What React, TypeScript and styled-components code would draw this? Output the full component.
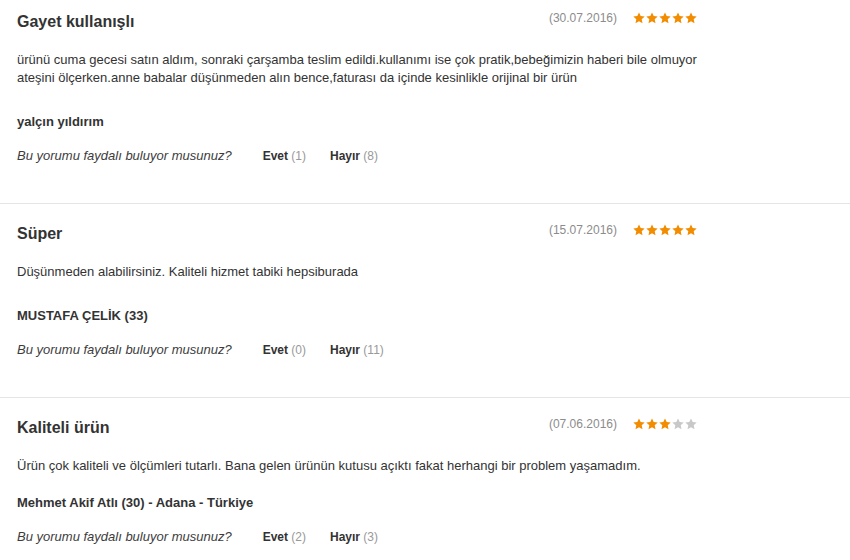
import React from "react";
import styled, { createGlobalStyle } from "styled-components";

const GlobalStyle = createGlobalStyle`
  html, body { margin: 0; padding: 0; background: #fff; }
  body { font-family: "Liberation Sans", Arial, sans-serif; color: #333; }
`;

const List = styled.div`
  width: 850px;
`;

const Review = styled.section`
  padding: 20px 150px 38px 17px;
  border-bottom: 1px solid #e5e5e5;
  &:first-child { padding-top: 12px; }
  &:last-child { border-bottom: none; }
`;

const Header = styled.div`
  display: flex;
  justify-content: space-between;
  align-items: flex-start;
`;

const Title = styled.h3`
  margin: 0;
  font-size: 16px;
  font-weight: bold;
  line-height: 20px;
  color: #333;
`;

const Meta = styled.div`
  display: flex;
  align-items: center;
  gap: 16px;
  margin-top: -1px;
  margin-right: 3px;
`;

const DateText = styled.span`
  font-size: 12px;
  line-height: 14px;
  color: #8c8c8c;
`;

const Stars = styled.div`
  display: flex;
  gap: 1px;
`;

const Body = styled.p<{ $tight?: boolean }>`
  margin: 19px 0 ${(p) => (p.$tight ? "19px" : "26px")};
  font-size: 13px;
  line-height: 18px;
  color: #333;
`;

const Author = styled.div`
  font-size: 13px;
  font-weight: bold;
  line-height: 18px;
  color: #333;
`;

const Helpful = styled.div`
  display: flex;
  align-items: center;
  margin-top: 16px;
  font-size: 12px;
  line-height: 18px;
`;

const Question = styled.span`
  font-size: 13px;
  font-style: italic;
  color: #3c3c3c;
  margin-right: 31px;
`;

const Vote = styled.span`
  font-weight: bold;
  color: #333;
  & + & { margin-left: 24px; }
`;

const Count = styled.span`
  font-weight: normal;
  color: #999;
`;

const Star: React.FC<{ on: boolean }> = ({ on }) => (
  <svg width="12" height="12" viewBox="0 0 24 24">
    <path
      d="M12 1l3.4 7.2 7.9.9-5.9 5.4 1.6 7.8L12 18.4l-7 3.9 1.6-7.8L.7 9.1l7.9-.9z"
      fill={on ? "#f28c00" : "#c8c8c8"}
    />
  </svg>
);

type R = {
  title: string;
  date: string;
  rating: number;
  body: string[];
  author: string;
  yes: number;
  no: number;
  tight?: boolean;
};

const reviews: R[] = [
  {
    title: "Gayet kullanışlı",
    date: "(30.07.2016)",
    rating: 5,
    body: [
      "ürünü cuma gecesi satın aldım, sonraki çarşamba teslim edildi.kullanımı ise çok pratik,bebeğimizin haberi bile olmuyor",
      "ateşini ölçerken.anne babalar düşünmeden alın bence,faturası da içinde kesinlikle orijinal bir ürün",
    ],
    author: "yalçın yıldırım",
    yes: 1,
    no: 8,
  },
  {
    title: "Süper",
    date: "(15.07.2016)",
    rating: 5,
    body: ["Düşünmeden alabilirsiniz. Kaliteli hizmet tabiki hepsiburada"],
    author: "MUSTAFA ÇELİK (33)",
    yes: 0,
    no: 11,
  },
  {
    title: "Kaliteli ürün",
    date: "(07.06.2016)",
    rating: 3,
    body: [
      "Ürün çok kaliteli ve ölçümleri tutarlı. Bana gelen ürünün kutusu açıktı fakat herhangi bir problem yaşamadım.",
    ],
    author: "Mehmet Akif Atlı (30) - Adana - Türkiye",
    yes: 2,
    no: 3,
    tight: true,
  },
];

export default function App() {
  return (
    <>
      <GlobalStyle />
      <List>
        {reviews.map((r, i) => (
          <Review key={i}>
            <Header>
              <Title>{r.title}</Title>
              <Meta>
                <DateText>{r.date}</DateText>
                <Stars>
                  {[0, 1, 2, 3, 4].map((s) => (
                    <Star key={s} on={s < r.rating} />
                  ))}
                </Stars>
              </Meta>
            </Header>
            <Body $tight={r.tight}>
              {r.body.map((l, j) => (
                <React.Fragment key={j}>
                  {j > 0 && <br />}
                  {l}
                </React.Fragment>
              ))}
            </Body>
            <Author>{r.author}</Author>
            <Helpful>
              <Question>Bu yorumu faydalı buluyor musunuz?</Question>
              <Vote>
                Evet <Count>({r.yes})</Count>
              </Vote>
              <Vote>
                Hayır <Count>({r.no})</Count>
              </Vote>
            </Helpful>
          </Review>
        ))}
      </List>
    </>
  );
}
